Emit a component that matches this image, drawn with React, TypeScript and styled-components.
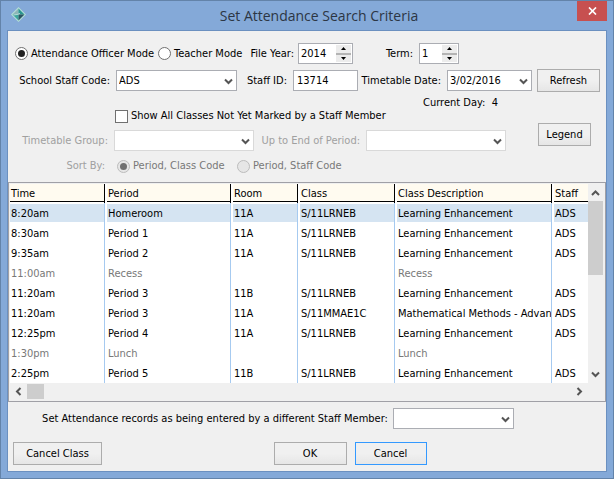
import React, { useState } from "react";
import styled, { createGlobalStyle, css } from "styled-components";

const GlobalStyle = createGlobalStyle`
  *, *::before, *::after { box-sizing: border-box; }
  body {
    margin: 0;
    font-family: "DejaVu Sans Condensed", "Noto Sans", sans-serif;
    font-size: 11px;
    line-height: 14px;
    color: #000;
  }
  button, input, select { font: inherit; color: inherit; }
`;

const Dialog = styled.main`
  display: flex;
  flex-direction: column;
  min-height: 100vh;
  padding: 0 6px 6px;
  background: #84a9d8;
  border: 1px solid #6383a9;
`;

const TitleBar = styled.header`
  display: grid;
  grid-template-columns: 30px 1fr 30px;
  height: 29px;
`;

const TitleIcon = styled.svg`
  margin: 6px 0 0 4px;
`;

const Title = styled.h1`
  margin: 0;
  padding-left: 24px;
  font: 400 14px/29px "Open Sans", "Noto Sans", sans-serif;
  color: #2c3644;
  text-align: center;
`;

const CloseButton = styled.button`
  display: flex;
  align-items: center;
  justify-content: center;
  height: 20px;
  padding: 0;
  border: 0;
  background: #c75050;
`;

const Content = styled.div`
  flex: 1;
  display: flex;
  flex-direction: column;
  border: 1px solid #6b90c0;
  background: #f0f0f0;
`;

const Row = styled.div<{ $top?: number; $left?: number }>`
  display: flex;
  align-items: center;
  margin-top: ${(p) => p.$top ?? 0}px;
  padding-left: ${(p) => p.$left ?? 0}px;
`;

const DayRow = styled(Row)`
  line-height: 12px;
`;

const Label = styled.label<{ $width?: number; $disabled?: boolean; $gap?: number }>`
  flex: none;
  width: ${(p) => (p.$width ? `${p.$width}px` : "auto")};
  padding-right: ${(p) => p.$gap ?? 6}px;
  text-align: right;
  white-space: nowrap;
  color: ${(p) => (p.$disabled ? "#a0a0a0" : "#000")};
`;

const Choice = styled.label<{ $width: number; $disabled?: boolean }>`
  flex: none;
  display: flex;
  align-items: center;
  gap: 3px;
  width: ${(p) => p.$width}px;
  white-space: nowrap;
  color: ${(p) => (p.$disabled ? "#787878" : "#000")};
`;

const Radio = styled.input.attrs({ type: "radio" })`
  appearance: none;
  flex: none;
  display: grid;
  place-items: center;
  width: 13px;
  height: 13px;
  margin: 0;
  border: 1px solid #707070;
  border-radius: 50%;
  background: #fff;
  &:checked::before {
    content: "";
    width: 7px;
    height: 7px;
    border-radius: 50%;
    background: #222;
  }
  &:disabled { border-color: #bcbcbc; background: #e6e6e6; }
  &:disabled:checked::before { background: #707070; }
`;

const CheckBox = styled.input.attrs({ type: "checkbox" })`
  appearance: none;
  flex: none;
  width: 13px;
  height: 13px;
  margin: 0;
  border: 1px solid #707070;
  background: #fff;
  &:checked { box-shadow: inset 0 0 0 2px #fff; background: #222; }
`;

const fieldBox = css`
  height: 21px;
  border: 1px solid #abadb3;
  border-radius: 0;
  background: #fff;
`;

const TextField = styled.input<{ $width: number }>`
  ${fieldBox}
  width: ${(p) => p.$width}px;
  padding: 0 3px;
`;

const SelectBox = styled.span<{ $width: number }>`
  position: relative;
  flex: none;
  width: ${(p) => p.$width}px;
  height: 21px;
  & > svg { position: absolute; right: 4px; top: 8px; pointer-events: none; }
`;

const NativeSelect = styled.select`
  ${fieldBox}
  display: block;
  appearance: none;
  width: 100%;
  padding: 0 16px 0 2px;
  &:disabled { opacity: 1; border-color: #d9d9d9; }
`;

const SpinBox = styled.span<{ $width: number }>`
  ${fieldBox}
  flex: none;
  display: flex;
  width: ${(p) => p.$width}px;
  padding: 1px;
`;

const SpinInput = styled.input`
  flex: 1;
  min-width: 0;
  padding: 0 0 0 1px;
  border: 0;
  background: none;
`;

const SpinButtons = styled.span`
  display: grid;
  grid-template-rows: 1fr 1fr;
  gap: 2px;
  width: 15px;
  background: #b4b4b4;
`;

const SpinButton = styled.button`
  display: flex;
  align-items: center;
  justify-content: center;
  padding: 0;
  border: 0;
  background: #ececec;
`;

const Button = styled.button<{ $width: number; $primary?: boolean }>`
  flex: none;
  width: ${(p) => p.$width}px;
  height: 23px;
  padding: 0;
  border: 1px solid ${(p) => (p.$primary ? "#3399ff" : "#acacac")};
  background: linear-gradient(#f0f0f0 50%, #e6e6e6);
`;

const Push = styled.div`
  margin-left: auto;
  padding-right: 6px;
`;

const Filters = styled.section`
  display: flex;
  justify-content: space-between;
  align-items: flex-start;
  padding-right: 15px;
`;

const GridFrame = styled.section`
  display: grid;
  grid-template-columns: minmax(0, 1fr) 15px;
  grid-template-rows: auto 15px;
  row-gap: 1px;
  margin-top: 9px;
  padding: 1px 2px 2px 1px;
  border: 1px solid #a0a0a6;
  background: #f0f0f0;
`;

const Sheet = styled.div`
  overflow: hidden;
  background: #fff;
`;

const Table = styled.table`
  width: 100%;
  table-layout: fixed;
  border-collapse: separate;
  border-spacing: 0;
`;

const Column = styled.col<{ $width?: number }>`
  width: ${(p) => (p.$width ? `${p.$width}px` : "auto")};
`;

const HeadCell = styled.th`
  height: 19px;
  padding: 0 0 1px 2px;
  border-right: 1px solid #000;
  font-weight: 400;
  text-align: left;
  &:first-child { padding-left: 0; }
  &:last-child { border-right: 0; }
`;

const BodyCell = styled.td`
  height: 20px;
  padding: 1px 0 1px 2px;
  border-right: 1px solid #a6caf0;
  &:first-child { padding-left: 0; }
  &:last-child { border-right: 0; }
`;

const CellText = styled.div<{ $kind?: "head" | "selected" | "break" }>`
  height: 18px;
  padding-left: 1px;
  line-height: 20px;
  overflow: hidden;
  white-space: nowrap;
  color: ${(p) => (p.$kind === "break" ? "#787878" : "#000")};
  ${(p) => p.$kind === "head" && "background: #fffbf0; border-bottom: 1px solid #000;"}
  ${(p) => p.$kind === "selected" && "background: #d5e4f2;"}
`;

const ScrollBar = styled.div<{ $vertical?: boolean }>`
  display: flex;
  flex-direction: ${(p) => (p.$vertical ? "column" : "row")};
`;

const ScrollButton = styled.button`
  flex: none;
  display: flex;
  align-items: center;
  justify-content: center;
  width: 17px;
  height: 15px;
  padding: 0;
  border: 0;
  background: none;
  ${ScrollBar}[aria-orientation="vertical"] & { width: 15px; height: 17px; }
`;

const ScrollTrack = styled.div`
  flex: 1;
`;

const Thumb = styled.div<{ $vertical?: boolean }>`
  width: ${(p) => (p.$vertical ? "15px" : "17px")};
  height: ${(p) => (p.$vertical ? "74px" : "15px")};
  background: #cdcdcd;
`;

const Footer = styled.footer`
  display: grid;
  grid-template-columns: 1fr auto 1fr;
  margin: 13px 0 5px;
  padding: 0 5px;
`;

const ButtonPair = styled.div`
  display: flex;
  gap: 8px;
  padding-left: 86px;
`;

const Centered = styled(Row)`
  justify-content: center;
  padding-right: 58px;
`;

type Direction = "up" | "down" | "left" | "right";

const chevronPaths: Record<Direction, string> = {
  down: "M1 1.5 4.5 5 8 1.5",
  up: "M1 6 4.5 2.5 8 6",
  left: "M6.5 1 3 4.5 6.5 8",
  right: "M2.5 1 6 4.5 2.5 8",
};

const Chevron = ({ direction }: { direction: Direction }) => {
  const flat = direction === "up" || direction === "down";
  return (
    <svg width="9" height={flat ? 7 : 9} viewBox={flat ? "0 0 9 7" : "0 0 9 9"} aria-hidden="true">
      <path d={chevronPaths[direction]} fill="none" stroke="#555" strokeWidth="2" />
    </svg>
  );
};

const Arrow = ({ up }: { up?: boolean }) => (
  <svg width="5" height="3" viewBox="0 0 5 3" aria-hidden="true">
    <path d={up ? "M0 3 2.5 0 5 3z" : "M0 0h5L2.5 3z"} fill="#000" />
  </svg>
);

const Select = (props: { id: string; width: number; options?: string[]; disabled?: boolean }) => (
  <SelectBox $width={props.width}>
    <NativeSelect id={props.id} disabled={props.disabled}>
      {(props.options ?? [""]).map((o) => (
        <option key={o}>{o}</option>
      ))}
    </NativeSelect>
    <Chevron direction="down" />
  </SelectBox>
);

const Spinner = ({ id, width, initial }: { id: string; width: number; initial: number }) => {
  const [value, setValue] = useState(initial);
  return (
    <SpinBox $width={width}>
      <SpinInput id={id} value={value} onChange={(e) => setValue(Number(e.target.value) || 0)} />
      <SpinButtons>
        <SpinButton aria-label="Increase" onClick={() => setValue(value + 1)}>
          <Arrow up />
        </SpinButton>
        <SpinButton aria-label="Decrease" onClick={() => setValue(value - 1)}>
          <Arrow />
        </SpinButton>
      </SpinButtons>
    </SpinBox>
  );
};

const headings = ["Time", "Period", "Room", "Class", "Class Description", "Staff"];
const widths = [95, 126, 67, 97, 157, undefined];

const lessons: string[][] = [
  ["8:20am", "Homeroom", "11A", "S/11LRNEB", "Learning Enhancement", "ADS"],
  ["8:30am", "Period 1", "11A", "S/11LRNEB", "Learning Enhancement", "ADS"],
  ["9:35am", "Period 2", "11A", "S/11LRNEB", "Learning Enhancement", "ADS"],
  ["11:00am", "Recess", "", "", "Recess", ""],
  ["11:20am", "Period 3", "11B", "S/11LRNEB", "Learning Enhancement", "ADS"],
  ["11:20am", "Period 3", "11A", "S/11MMAE1C", "Mathematical Methods - Advanc", "ADS"],
  ["12:25pm", "Period 4", "11A", "S/11LRNEB", "Learning Enhancement", "ADS"],
  ["1:30pm", "Lunch", "", "", "Lunch", ""],
  ["2:25pm", "Period 5", "11B", "S/11LRNEB", "Learning Enhancement", "ADS"],
];

export default function App() {
  const [mode, setMode] = useState("officer");
  const [selected, setSelected] = useState(0);

  return (
    <>
      <GlobalStyle />
      <Dialog>
        <TitleBar>
          <TitleIcon width="15" height="15" viewBox="0 0 15 15" aria-hidden="true">
            <path d="M7.5 0 15 7.5 7.5 15 0 7.5z" fill="#b4ded6" />
            <path d="M7.5 1.5v6h-6z" fill="#8db5b8" />
            <path d="M7.5 1.5 13.5 7.5h-6z" fill="#2a9690" />
            <path d="M1.5 7.5h6v6z" fill="#3da69d" />
            <path d="M7.5 7.5h6l-6 6z" fill="#2c5663" />
            <path d="M2.5 8 6 7.5 9 6.5" fill="none" stroke="#b5dad6" />
          </TitleIcon>
          <Title>Set Attendance Search Criteria</Title>
          <CloseButton aria-label="Close">
            <svg width="9" height="8" viewBox="0 0 9 8" aria-hidden="true">
              <path d="M1 .5 8 7.5M8 .5 1 7.5" stroke="#fff" strokeWidth="1.7" />
            </svg>
          </CloseButton>
        </TitleBar>
        <Content>
          <Row $top={12} $left={7}>
            <Choice $width={143}>
              <Radio name="mode" checked={mode === "officer"} onChange={() => setMode("officer")} />
              Attendance Officer Mode
            </Choice>
            <Choice $width={86}>
              <Radio name="mode" checked={mode === "teacher"} onChange={() => setMode("teacher")} />
              Teacher Mode
            </Choice>
            <Label htmlFor="year" $width={54} $gap={4}>File Year:</Label>
            <Spinner id="year" width={55} initial={2014} />
            <Label htmlFor="term" $width={66}>Term:</Label>
            <Spinner id="term" width={40} initial={1} />
          </Row>
          <Row $top={5}>
            <Label htmlFor="code" $width={108}>School Staff Code:</Label>
            <Select id="code" width={121} options={["ADS"]} />
            <Label htmlFor="staff" $width={56}>Staff ID:</Label>
            <TextField id="staff" $width={65} defaultValue="13714" />
            <Label htmlFor="date" $width={89}>Timetable Date:</Label>
            <Select id="date" width={85} options={["3/02/2016"]} />
            <Push>
              <Button $width={63}>Refresh</Button>
            </Push>
          </Row>
          <DayRow $top={5} $left={415}>Current Day:&nbsp; 4</DayRow>
          <Row $left={107}>
            <Choice $width={270}>
              <CheckBox />
              Show All Classes Not Yet Marked by a Staff Member
            </Choice>
          </Row>
          <Filters>
            <div>
              <Row $top={7}>
                <Label htmlFor="group" $width={106} $disabled>Timetable Group:</Label>
                <Select id="group" width={140} disabled />
                <Label htmlFor="until" $width={112} $disabled>Up to End of Period:</Label>
                <Select id="until" width={140} disabled />
              </Row>
              <Row $top={8}>
                <Label as="span" $width={109} $gap={12} $disabled>Sort By:</Label>
                <Choice $width={120} $disabled>
                  <Radio name="sort" defaultChecked disabled />
                  Period, Class Code
                </Choice>
                <Choice $width={120} $disabled>
                  <Radio name="sort" disabled />
                  Period, Staff Code
                </Choice>
              </Row>
            </div>
            <Button $width={53}>Legend</Button>
          </Filters>
          <GridFrame>
            <Sheet>
              <Table>
                <colgroup>
                  {widths.map((w, i) => (
                    <Column key={headings[i]} $width={w} />
                  ))}
                </colgroup>
                <thead>
                  <tr>
                    {headings.map((h) => (
                      <HeadCell key={h} scope="col">
                        <CellText $kind="head">{h}</CellText>
                      </HeadCell>
                    ))}
                  </tr>
                </thead>
                <tbody>
                  {lessons.map((lesson, r) => (
                    <tr key={r} onClick={() => setSelected(r)}>
                      {lesson.map((text, c) => (
                        <BodyCell key={c}>
                          <CellText $kind={!lesson[2] ? "break" : r === selected ? "selected" : undefined}>
                            {text}
                          </CellText>
                        </BodyCell>
                      ))}
                    </tr>
                  ))}
                </tbody>
              </Table>
            </Sheet>
            <ScrollBar $vertical aria-orientation="vertical">
              <ScrollButton aria-label="Scroll up"><Chevron direction="up" /></ScrollButton>
              <ScrollTrack><Thumb $vertical /></ScrollTrack>
              <ScrollButton aria-label="Scroll down"><Chevron direction="down" /></ScrollButton>
            </ScrollBar>
            <ScrollBar>
              <ScrollButton aria-label="Scroll left"><Chevron direction="left" /></ScrollButton>
              <ScrollTrack><Thumb /></ScrollTrack>
              <ScrollButton aria-label="Scroll right"><Chevron direction="right" /></ScrollButton>
            </ScrollBar>
          </GridFrame>
          <Centered $top={6}>
            <Label htmlFor="other" $gap={5}>
              Set Attendance records as being entered by a different Staff Member:
            </Label>
            <Select id="other" width={121} />
          </Centered>
          <Footer>
            <Button $width={89}>Cancel Class</Button>
            <ButtonPair>
              <Button $width={73}>OK</Button>
              <Button $width={72} $primary>Cancel</Button>
            </ButtonPair>
          </Footer>
        </Content>
      </Dialog>
    </>
  );
}
